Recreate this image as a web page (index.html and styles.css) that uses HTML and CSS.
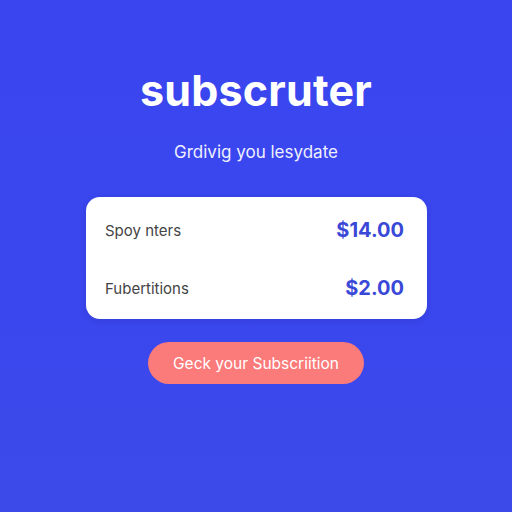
FILE: index.html
```html
<!DOCTYPE html>
<html lang="en">
<head>
    <meta charset="UTF-8">
    <meta name="viewport" content="width=device-width, initial-scale=1.0">
    <title>subscruter</title>
    <link rel="stylesheet" href="styles.css">
</head>
<body>
    <main class="page">
        <h1 class="brand">subscruter</h1>
        <p class="tagline">Grdivig you lesydate</p>

        <section class="card">
            <div class="row">
                <span class="label">Spoy nters</span>
                <span class="price">$14.00</span>
            </div>
            <div class="row">
                <span class="label">Fubertitions</span>
                <span class="price">$2.00</span>
            </div>
        </section>

        <button class="cta">Geck your Subscriition</button>
    </main>
</body>
</html>
```

FILE: styles.css
```css
* {
    box-sizing: border-box;
}
body {
    margin: 0;
    height: 512px;
    background: linear-gradient(180deg, #3a45ef 0%, #3a47ee 60%, #3b4ae8 100%);
    font-family: 'Inter', 'Liberation Sans', sans-serif;
}
.page {
    display: flex;
    flex-direction: column;
    align-items: center;
    padding-top: 65px;
}
.brand {
    margin: 0;
    font-size: 43px;
    font-weight: 700;
    color: #fff;
    letter-spacing: 0.2px;
    line-height: 50px;
}
.tagline {
    margin: 27px 0 0;
    font-size: 17px;
    color: #eef0ff;
    line-height: 20px;
}
.card {
    margin-top: 35px;
    width: 341px;
    height: 122px;
    margin-left: 1px;
    background: #fff;
    border-radius: 14px;
    padding: 22px 23px 0 19px;
    display: flex;
    flex-direction: column;
    gap: 36px;
    box-shadow: 0 2px 6px rgba(20, 20, 90, 0.15);
}
.row {
    display: flex;
    justify-content: space-between;
    align-items: center;
    height: 22px;
}
.label {
    font-size: 15px;
    color: #444;
}
.price {
    font-size: 20px;
    font-weight: 700;
    color: #3a48d8;
}
.cta {
    margin-top: 23px;
    width: 216px;
    height: 42px;
    border: none;
    border-radius: 21px;
    background: #fb7a7a;
    color: #fff;
    font-family: inherit;
    font-size: 15.5px;
    cursor: pointer;
}
```
